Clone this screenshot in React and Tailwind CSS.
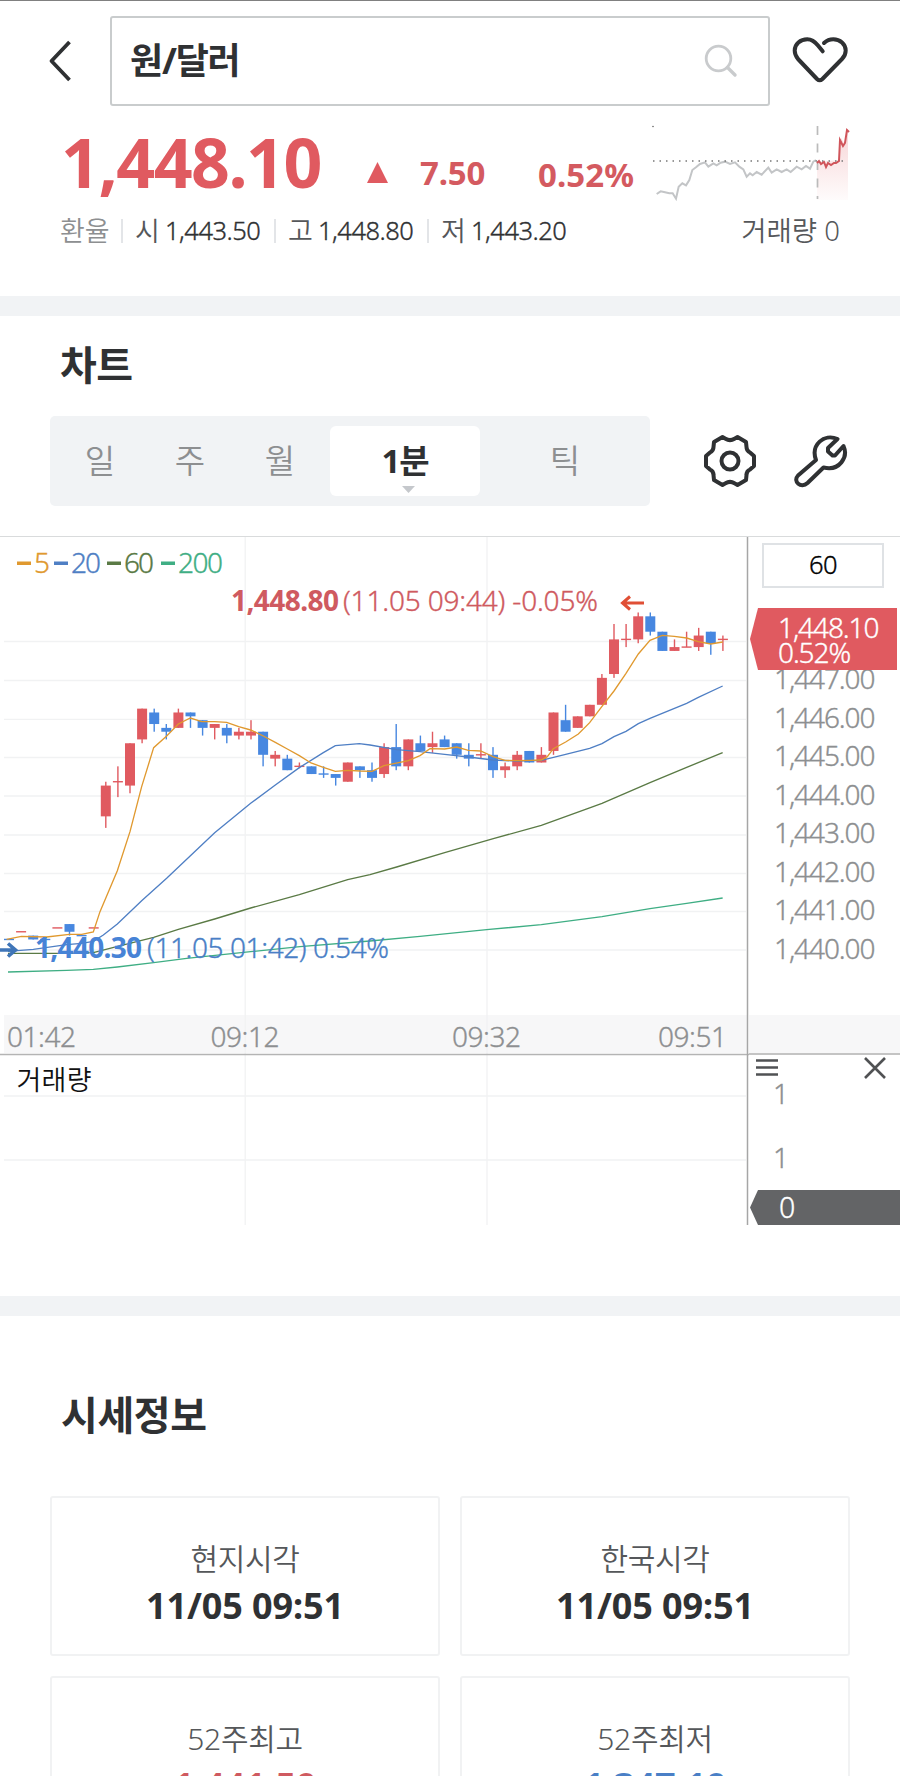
import React, {useState} from "react";

const RED = "#e05a60";
const BLUE = "#4787e0";

// [open, high, low, close] as the offset from 1,440.00
const candles = [
  [0.3, 0.3, 0.3, 0.3, "down"],
  [0.5, 0.5, 0.5, 0.5],
  [0.4, 0.4, 0.3, 0.3],
  [0.3, 0.3, 0.3, 0.3, "down"],
  [0.6, 0.6, 0.6, 0.6],
  [0.7, 0.7, 0.4, 0.5],
  [0.4, 0.4, 0.4, 0.4, "down"],
  [0.6, 0.6, 0.6, 0.6],
  [3.5, 4.4, 3.2, 4.3],
  [4.4, 4.8, 4.0, 4.4],
  [4.3, 5.4, 4.1, 5.4],
  [5.5, 6.3, 5.4, 6.3],
  [6.2, 6.3, 5.7, 5.9],
  [5.8, 5.9, 5.5, 5.7],
  [5.8, 6.3, 5.8, 6.2],
  [6.2, 6.2, 5.8, 6.1],
  [6.0, 6.0, 5.6, 5.8],
  [5.8, 5.9, 5.5, 5.9],
  [5.8, 5.9, 5.4, 5.6],
  [5.6, 5.8, 5.5, 5.7],
  [5.6, 6.0, 5.5, 5.7],
  [5.7, 5.7, 4.8, 5.1],
  [5.0, 5.2, 4.8, 5.1],
  [5.0, 5.1, 4.7, 4.7],
  [4.8, 4.9, 4.75, 4.8],
  [4.8, 4.8, 4.6, 4.6],
  [4.6, 4.8, 4.5, 4.6, "down"],
  [4.6, 4.6, 4.3, 4.5],
  [4.4, 4.9, 4.4, 4.9],
  [4.8, 4.8, 4.5, 4.7],
  [4.7, 4.9, 4.4, 4.5],
  [4.6, 5.4, 4.5, 5.3],
  [5.3, 5.9, 4.7, 4.8],
  [4.8, 5.5, 4.7, 5.5],
  [5.4, 5.6, 5.2, 5.2],
  [5.3, 5.7, 5.15, 5.4],
  [5.5, 5.6, 5.3, 5.3],
  [5.4, 5.4, 5.0, 5.1],
  [5.1, 5.4, 4.8, 5.0],
  [5.1, 5.4, 5.0, 5.1],
  [5.1, 5.3, 4.5, 4.7],
  [4.7, 4.9, 4.5, 4.8],
  [4.8, 5.2, 4.7, 5.1],
  [5.2, 5.2, 4.9, 4.9],
  [4.9, 5.3, 4.9, 5.1],
  [5.2, 6.2, 5.1, 6.2],
  [6.0, 6.4, 5.7, 5.7],
  [5.8, 6.1, 5.8, 6.1],
  [6.1, 6.4, 6.1, 6.4],
  [6.4, 7.2, 6.4, 7.1],
  [7.2, 8.5, 7.1, 8.1],
  [8.1, 8.5, 7.9, 8.1],
  [8.1, 8.8, 8.0, 8.7],
  [8.7, 8.8, 8.2, 8.3],
  [8.3, 8.3, 7.8, 7.8],
  [7.8, 8.1, 7.8, 7.9],
  [7.9, 8.3, 7.9, 7.9],
  [7.9, 8.4, 7.8, 8.2],
  [8.3, 8.3, 7.7, 8.0],
  [8.1, 8.2, 7.8, 8.1],
];

const averages = [
  {
    color: "#3fae84",
    points:
      "24,1326 200,1321 280,1318 352,1311 461,1298 560,1285 752,1265 900,1250 1110,1233 1260,1219 1460,1199 1624,1184 1806,1160 1950,1136 2060,1120 2168,1104",
  },
  {
    color: "#5a7a45",
    points:
      "24,1270 200,1270 280,1268 350,1250 461,1222 535,1198 644,1167 752,1134 898,1094 1043,1049 1110,1034 1190,1011 1334,968 1480,926 1624,886 1769,834 1806,820 1950,758 2060,712 2168,668",
  },
  {
    color: "#4f7fc4",
    points:
      "24,1264 100,1258 200,1244 245,1240 280,1234 310,1215 352,1182 425,1112 500,1045 644,908 752,820 826,765 898,713 970,668 1006,647 1078,641 1110,645 1190,659 1260,665 1334,673 1405,681 1479,690 1550,693 1624,691 1697,673 1769,655 1806,641 1842,620 1878,604 1915,581 1950,565 2060,520 2095,502 2168,468",
  },
  {
    color: "#e0992f",
    points:
      "20,1228 64,1219 140,1221 208,1213 245,1213 280,1206 300,1145 352,1022 390,905 425,770 461,653 500,618 535,582 571,564 605,575 644,575 680,577 716,590 752,600 790,618 826,637 862,657 898,677 933,699 970,712 1006,724 1043,721 1080,723 1116,724 1152,707 1225,692 1260,677 1290,656 1334,657 1370,651 1405,661 1442,663 1479,680 1515,691 1551,692 1588,691 1624,690 1642,680 1660,656 1697,636 1735,612 1769,578 1806,529 1842,483 1878,430 1915,372 1950,331 1987,316 2023,319 2060,324 2095,335 2132,342 2168,336",
  },
];

const legend = [
  {label: "5", color: "#e0992f", x: 17, tx: 34, w: 14},
  {label: "20", color: "#4f7fc4", x: 54, tx: 71, w: 30},
  {label: "60", color: "#5a7a45", x: 107, tx: 124, w: 30},
  {label: "200", color: "#3fae84", x: 161, tx: 178, w: 45},
];

const priceY = p => 951 - p * 38.47;

const Candle = ({data, index}) => {
  const [open, high, low, close, dir] = data;
  const color = dir === "down" || close < open ? BLUE : RED;
  const x = 9 + index * 12.1;
  const top = priceY(Math.max(open, close));
  const height = Math.abs(open - close) * 38.47;
  return (
    <g fill={color}>
      <rect x={x - 0.7} y={priceY(high)} width="1.4" height={priceY(low) - priceY(high)} />
      <rect x={x - 5} y={height ? top : top - 0.7} width="10" height={height || 1.4} />
    </g>
  );
};

const BackIcon = () => (
  <svg width="24" height="42" viewBox="0 0 24 42" fill="none" stroke="#2f3133" strokeWidth="3.8">
    <path d="M21.500 2 3.500 21l18 19" strokeLinejoin="round" />
  </svg>
);

const SearchIcon = () => (
  <svg width="34" height="34" viewBox="0 0 34 34" fill="none" stroke="#c9cbcd" strokeWidth="2.8">
    <circle cx="14.500" cy="14.500" r="12.300" />
    <path d="m23.500 23.500 7.500 7.500" strokeWidth="3.400" strokeLinecap="round" />
  </svg>
);

const HeartIcon = () => (
  <svg
    width="56"
    height="48"
    viewBox="0 0 56 48"
    fill="none"
    stroke="#2f3133"
    strokeWidth="4"
    strokeLinecap="round"
    strokeLinejoin="round"
  >
    <path d="M30.700 14.300 26 8.500C22.500 4 19.500 2.200 15.300 2.200 8.300 2.200 2.700 7 2.700 13.500 2.700 17 4 19.500 6 22L25 42Q27.700 44.500 30.400 42L50 22C52.500 19.500 53.700 17 53.700 13.500 53.700 7 48 2.200 41.300 2.200Q36 2.200 32 6" />
  </svg>
);

const GearIcon = () => (
  <svg
    width="54"
    height="54"
    viewBox="0 0 54 54"
    fill="none"
    stroke="#2f3133"
    strokeWidth="4"
    strokeLinejoin="round"
  >
    <path d="M19.500 3 22.500 4.700Q27 7.500 31.500 4.700L34.500 3 43 8 43.500 13Q43.500 17 47 18.500L51 22V32L47 35.500Q43.500 37 43.500 41L43 46 34.500 51 31.500 49.300Q27 46.500 22.500 49.300L19.500 51 11 46 10.500 41Q10.500 37 7 35.500L3 32V22L7 18.500Q10.500 17 10.500 13L11 8Z" />
    <circle cx="27" cy="27" r="8.500" />
  </svg>
);

const WrenchIcon = () => (
  <svg
    width="54"
    height="54"
    viewBox="0 0 54 54"
    fill="none"
    stroke="#2f3133"
    strokeWidth="4"
    strokeLinejoin="round"
  >
    <path d="M43.500 5 34 14v3.500l4.500 4H41L49.500 12c5 11-4 25.500-20 21.500L13.500 49C7 55-1.500 47.500 4 41.500L22 26C16.500 11 30-1 43.500 5Z" />
  </svg>
);

const Sparkline = () => (
  <svg className="block" width="202" height="80" viewBox="650 122 202 80" fill="none">
    <defs>
      <linearGradient id="rise" x1="0" y1="0" x2="0" y2="1">
        <stop offset="0" stopColor={RED} stopOpacity="0.25" />
        <stop offset="1" stopColor={RED} stopOpacity="0.02" />
      </linearGradient>
    </defs>
    <path d="M817 162 839 160 841 138 845 145 848 130V200H817Z" fill="url(#rise)" />
    <polyline
      transform="translate(450 0) scale(0.33333)"
      points="620,582 632,574 645,577 658,580 668,580 678,596 686,560 697,550 708,556 718,540 727,510 738,502 750,492 765,487 775,500 790,490 800,496 812,488 825,485 840,492 855,487 868,500 880,508 890,530 900,520 908,526 920,516 935,524 955,503 965,518 980,508 995,516 1010,508 1022,516 1040,500 1055,508 1068,498 1080,506 1090,485 1098,480"
      stroke="#c3c5c7"
      strokeWidth="6"
    />
    <path d="M653 161H848" stroke="#777" strokeWidth="1.500" strokeDasharray="1.500 5" />
    <path d="M817.500 126V199" stroke="#bbb" strokeWidth="1.700" strokeDasharray="9 8.500" />
    <path
      d="M817 163l2-2 2 3 3-2 2 5 2-4 3 2 3-2 2 0 3-2 1-21 3 6 2-3 2-13 2 2"
      stroke="#d0555b"
      strokeWidth="2"
    />
    <circle cx="653" cy="126.500" r="0.800" fill="#666" />
  </svg>
);

const Plot = () => (
  <svg
    className="block shrink-0"
    width="749"
    height="688"
    viewBox="0 537 749 688"
    fontWeight="350"
    fontSize="28"
  >
    <rect x="4" y="1015" width="743" height="38" fill="#f7f7f8" />
    <g stroke="#f1f2f3" strokeWidth="1.300">
      {[641.5, 680.5, 719.3, 757.5, 796, 835, 873.5, 911.5, 950, 1096, 1160].map(y => (
        <path key={y} d={`M4 ${y}H746`} />
      ))}
      <path d="M245.200 537V1225M487 537V1225" />
    </g>

    {legend.map(l => (
      <g key={l.label} fill={l.color}>
        <rect x={l.x} y="561.500" width="14" height="3.500" />
        <text x={l.tx} y="573" textLength={l.w} stroke={l.color} strokeWidth="0.350">
          {l.label}
        </text>
      </g>
    ))}

    {candles.map((c, i) => (
      <Candle key={i} data={c} index={i} />
    ))}
    <g transform="translate(0 530) scale(0.33333)" fill="none" strokeWidth="4">
      {averages.map(a => (
        <polyline key={a.color} points={a.points} stroke={a.color} />
      ))}
    </g>

    <g fill="#cf5a60">
      <text x="231" y="610.500" fontWeight="700" textLength="108">
        1,448.80
      </text>
      <text x="343" y="610.500" textLength="255" stroke="#cf5a60" strokeWidth="0.350">
        (11.05 09:44) -0.05%
      </text>
    </g>
    <path d="M644 603H623M630 596.500 622.500 603l7.500 6.500" fill="none" stroke="#e04f35" strokeWidth="3" />
    <g fill="#4a7fc6">
      <text x="35" y="957.500" fontWeight="700" fill="#4783d6" textLength="107">
        1,440.30
      </text>
      <text x="147" y="957.500" textLength="242" stroke="#4a7fc6" strokeWidth="0.350">
        (11.05 01:42) 0.54%
      </text>
    </g>
    <path d="M0 950H15M8 943.500 15.500 950 8 956.500" fill="none" stroke="#3f75b8" strokeWidth="3.600" />

    <g fill="#8d8f91" stroke="#8d8f91" strokeWidth="0.350">
      <text x="7" y="1046.500" textLength="69">
        01:42
      </text>
      <text x="210.500" y="1046.500" textLength="69">
        09:12
      </text>
      <text x="452" y="1046.500" textLength="69">
        09:32
      </text>
      <text x="658" y="1046.500" textLength="69">
        09:51
      </text>
    </g>
    <text x="16.500" y="1090" fontSize="27" fill="#111" textLength="75">
      거래량
    </text>
    <path d="M0 1054.500H749" stroke="#b4b4b4" strokeWidth="1.500" />
    <path d="M747.500 536V1225" stroke="#a6a6a6" strokeWidth="1.500" />
  </svg>
);

const PriceAxis = () => (
  <div className="flex flex-1 flex-col font-[350] text-[28px] leading-none tracking-[-1.1px] text-[#8d8f91] [-webkit-text-stroke:0.35px]">
    <div className="relative h-[478px] pt-[6px]">
      <div className="ml-[13px] flex h-[45px] w-[122px] items-center justify-center border-2 border-[#dfe2e5] pb-[2px] text-[25.5px] tracking-[-0.5px] text-black">
        60
      </div>
      <div className="mt-[71px]">
        {["1,447.00", "1,446.00", "1,445.00", "1,444.00", "1,443.00", "1,442.00", "1,441.00", "1,440.00"].map(
          p => (
            <div key={p} className="flex h-[38.5px] items-center pl-[25px]">
              {p}
            </div>
          )
        )}
      </div>
      <div className="absolute left-[1px] top-[71px] h-[62px] w-[147px] bg-[#e05a60] pl-[28px] pt-[7px] leading-[25px] tracking-[-1.1px] text-white [clip-path:polygon(8px_0,100%_0,100%_100%,8px_100%,0_50%)]">
        <div>1,448.10</div>
        <div>0.52%</div>
      </div>
    </div>
    <div className="h-10 border-b-2 border-[#c4c4c4] bg-[#f7f7f8]" />
    <div className="flex items-start justify-between pl-[7px] pr-[14px] pt-[2px]">
      <svg width="22" height="20" viewBox="0 0 22 20" stroke="#505254" strokeWidth="2.600">
        <path d="M0 3.500H22M0 10.500H22M0 17.500H22" />
      </svg>
      <svg width="22" height="22" viewBox="0 0 22 22" stroke="#505254" strokeWidth="2.600">
        <path d="m1 1 20 20M21 1 1 21" />
      </svg>
    </div>
    <div className="pl-[24px]">1</div>
    <div className="mt-9 pl-[24px]">1</div>
    <div className="mt-auto flex h-[35px] items-center bg-[#636466] pl-[30px] text-[28.5px] text-white [clip-path:polygon(9px_0,100%_0,100%_100%,9px_100%,1px_50%)]">
      0
    </div>
  </div>
);

const tabs = [
  {label: "일", box: "w-[90px]"},
  {label: "주", box: "w-[90px]"},
  {label: "월", box: "w-[90px]"},
  {label: "1분", box: "mx-[5px] w-[150px]"},
  {label: "틱", box: "w-[160px]"},
];

const PeriodTabs = () => {
  const [active, setActive] = useState("1분");
  return (
    <div className="flex h-[90px] w-[600px] items-center rounded-[5px] bg-[#f1f3f5] px-[5px]">
      {tabs.map(t => (
        <button
          key={t.label}
          onClick={() => setActive(t.label)}
          className={`relative flex h-[70px] shrink-0 items-center justify-center rounded-md pb-[1px] text-[33px] leading-none ${t.box} ${
            active === t.label
              ? "bg-white font-bold tracking-[-1px] text-[#2f3133]"
              : "font-[350] text-[#8d8f91]"
          }`}
        >
          {t.label}
          {t.label === "1분" && (
            <span className="absolute bottom-[3px] left-[72px] h-[7px] w-[13px] bg-[#c5c8cc] [clip-path:polygon(0_0,100%_0,50%_100%)]" />
          )}
        </button>
      ))}
    </div>
  );
};

const quotes = [
  {label: "현지시각", value: "11/05 09:51", color: "text-[#2f3133]"},
  {label: "한국시각", value: "11/05 09:51", color: "text-[#2f3133]"},
  {label: "52주최고", value: "1,441.50", color: "text-[#cf5a60]"},
  {label: "52주최저", value: "1,347.10", color: "text-[#4a7fc6]"},
];

const Stat = ({label, value}) => (
  <div className="flex h-6 items-center border-l-2 border-[#e3e5e8] pl-3 pr-[13px]">
    <span className="mr-[6px] w-6 text-[#55575a]">{label}</span>
    <span className="w-[96px] text-[25.5px] tracking-[-0.5px] text-[#2f3133] [-webkit-text-stroke:0.35px]">
      {value}
    </span>
  </div>
);

const App = () => {
  return (
    <div className="h-[1776px] w-[900px] overflow-hidden border-t border-[#808080] bg-white font-['Noto_Sans','Noto_Sans_CJK_KR',sans-serif]">
      <header className="flex h-[105px] items-center pl-[48px] pt-[15px]">
        <BackIcon />
        <div className="ml-[38px] flex h-[90px] w-[660px] items-center justify-between rounded-[3px] border-2 border-[#c9cccd] pl-[18px] pr-[30px]">
          <span className="text-[36px] font-bold leading-none tracking-[-1.2px] text-[#2f3133]">
            원/달러
          </span>
          <SearchIcon />
        </div>
        <div className="ml-[22px]">
          <HeartIcon />
        </div>
      </header>

      <section className="h-[190px]">
        <div className="flex h-[98px] items-baseline pl-[61px] font-bold leading-none text-[#e05a60]">
          <span className="w-[306px] pt-[22px] text-[68px] tracking-[-1.5px]">1,448.10</span>
          <svg width="21" height="21" viewBox="0 0 21 21" className="mr-[32px] translate-y-[-5px]">
            <path d="M10.500 0 21 21H0Z" fill={RED} />
          </svg>
          <span className="w-[118px] translate-y-[-3px] text-[33px] tracking-[-0.2px] text-[#d45a60]">
            7.50
          </span>
          <span className="w-[112px] translate-y-[-1px] text-[33px] tracking-[0.1px] text-[#d45a60]">
            0.52%
          </span>
          <div className="self-start pt-[16px]">
            <Sparkline />
          </div>
        </div>
        <div className="mt-[13px] flex items-center pl-[60px] pr-[60px] text-[27px] font-[350] leading-none">
          <span className="w-[61px] text-[#8d8f91]">환율</span>
          <Stat label="시" value="1,443.50" />
          <Stat label="고" value="1,448.80" />
          <Stat label="저" value="1,443.20" />
          <span className="ml-auto text-[27.5px] text-[#55575a]">거래량 0</span>
        </div>
      </section>

      <div className="h-5 bg-[#f1f3f5]" />

      <section className="h-[980px]">
        <h2 className="pl-[60px] pt-[28px] text-[40px] font-bold leading-[42px] tracking-[-0.5px] text-[#2f3133]">
          차트
        </h2>
        <div className="mt-[30px] flex items-center pl-[50px]">
          <PeriodTabs />
          <div className="ml-[53px] flex gap-[37px]">
            <GearIcon />
            <WrenchIcon />
          </div>
        </div>
        <div className="mt-[30px] flex h-[689px] border-t border-[#d9dbdc]">
          <Plot />
          <PriceAxis />
        </div>
      </section>

      <div className="h-5 bg-[#f1f3f5]" />

      <section className="px-[50px]">
        <h2 className="pl-[11px] pt-[78px] text-[40px] font-bold leading-[42px] tracking-[-0.4px] text-[#2f3133]">
          시세정보
        </h2>
        <div className="mt-[60px] grid grid-cols-2 gap-5">
          {quotes.map(q => (
            <div
              key={q.label}
              className="flex h-40 flex-col items-center rounded-[3px] border-2 border-[#f1f2f3] pt-[46px] leading-none"
            >
              <span className="text-[30px] font-[350] tracking-[-0.3px] text-[#55575a]">{q.label}</span>
              <span className={`mt-[14px] text-[36px] font-bold tracking-[-0.1px] ${q.color}`}>
                {q.value}
              </span>
            </div>
          ))}
        </div>
      </section>
    </div>
  );
};

export default App;
